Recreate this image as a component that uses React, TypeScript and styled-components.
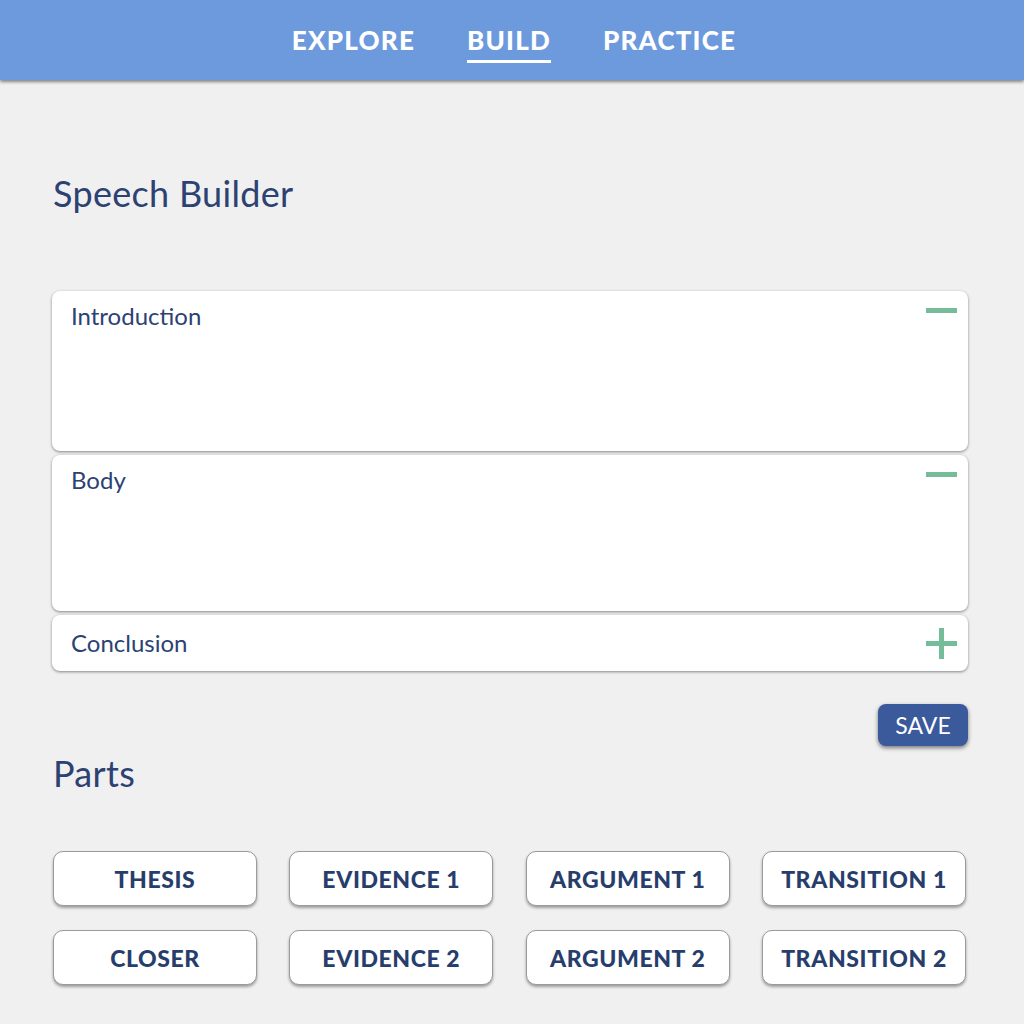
import styled, { createGlobalStyle } from 'styled-components'

const GlobalStyle = createGlobalStyle`
  html, body {
    margin: 0;
    padding: 0;
    background: #f0f0f0;
    font-family: Lato, 'Open Sans', sans-serif;
  }
`

const Page = styled.div`
  min-height: 1024px;
  background: #f0f0f0;
`

const Header = styled.header`
  height: 80px;
  background: #6c9adc;
  box-shadow: 0 2px 3px rgba(0, 0, 0, 0.45);
  display: flex;
  justify-content: center;
  align-items: flex-start;
  gap: 52px;
  padding-left: 4px;
  box-sizing: border-box;
`

const NavItem = styled.a<{ $active?: boolean }>`
  margin-top: 24px;
  color: #ffffff;
  font-size: 26px;
  font-weight: 900;
  letter-spacing: 1.2px;
  line-height: 32px;
  padding-bottom: 4px;
  border-bottom: 3px solid ${(p) => (p.$active ? '#ffffff' : 'transparent')};
  cursor: pointer;
`

const Content = styled.main`
  padding: 93px 56px 0 52px;
  display: flex;
  flex-direction: column;
`

const Heading = styled.h1<{ $gap?: number }>`
  margin: ${(p) => p.$gap ?? 0}px 0 0 1px;
  font-size: 36px;
  font-weight: 400;
  letter-spacing: 0.3px;
  color: #2c4272;
  line-height: 40px;
`

const Sections = styled.div`
  display: flex;
  flex-direction: column;
  gap: 4px;
  margin-top: 78px;
`

const Section = styled.div<{ $height: number }>`
  background: #ffffff;
  border-radius: 8px;
  box-shadow: 0 1px 3px rgba(0, 0, 0, 0.45);
  height: ${(p) => p.$height}px;
  display: flex;
  justify-content: space-between;
  align-items: flex-start;
  padding: 0 10px 0 19px;
  box-sizing: border-box;
`

const SectionLabel = styled.span<{ $open: boolean }>`
  margin-top: ${(p) => (p.$open ? '12px' : '15px')};
  font-size: 24px;
  color: #2c4272;
  line-height: 26px;
`

const Toggle = styled.span<{ $open: boolean }>`
  margin-top: ${(p) => (p.$open ? '17px' : '13px')};
  width: 32px;
  height: 32px;
  display: flex;
  align-items: flex-start;
`

const SaveRow = styled.div`
  display: flex;
  justify-content: flex-end;
  margin-top: 33px;
`

const SaveButton = styled.button`
  width: 90px;
  height: 42px;
  border: none;
  border-radius: 8px;
  background: #3b5a9b;
  color: #ffffff;
  font-family: Lato, sans-serif;
  font-size: 23px;
  box-shadow: 0 2px 4px rgba(0, 0, 0, 0.5);
  cursor: pointer;
`

const PartsGrid = styled.div`
  display: grid;
  grid-template-columns: repeat(4, 204px);
  justify-content: space-between;
  row-gap: 24px;
  margin: 58px 2px 0 1px;
`

const PartButton = styled.button`
  height: 55px;
  background: #ffffff;
  border: 1px solid #9a9a9a;
  border-radius: 10px;
  box-shadow: 0 2px 3px rgba(0, 0, 0, 0.35);
  color: #273e6c;
  font-family: Lato, sans-serif;
  font-weight: 900;
  font-size: 23px;
  letter-spacing: 0.6px;
  padding: 0;
  cursor: pointer;
`

const Minus = () => (
  <svg width="32" height="32" viewBox="0 0 32 32">
    <rect x="0" y="0" width="31" height="5" fill="#76bb9a" />
  </svg>
)

const Plus = () => (
  <svg width="32" height="32" viewBox="0 0 32 32">
    <rect x="0" y="13" width="31" height="5" fill="#76bb9a" />
    <rect x="13" y="0" width="5" height="31" fill="#76bb9a" />
  </svg>
)

const sections = [
  { label: 'Introduction', open: true, height: 160 },
  { label: 'Body', open: true, height: 156 },
  { label: 'Conclusion', open: false, height: 56 },
]

const parts = [
  'THESIS',
  'EVIDENCE 1',
  'ARGUMENT 1',
  'TRANSITION 1',
  'CLOSER',
  'EVIDENCE 2',
  'ARGUMENT 2',
  'TRANSITION 2',
]

export default function App() {
  return (
    <Page>
      <GlobalStyle />
      <Header>
        <NavItem>EXPLORE</NavItem>
        <NavItem $active>BUILD</NavItem>
        <NavItem>PRACTICE</NavItem>
      </Header>
      <Content>
        <Heading>Speech Builder</Heading>
        <Sections>
          {sections.map((s) => (
            <Section key={s.label} $height={s.height}>
              <SectionLabel $open={s.open}>{s.label}</SectionLabel>
              <Toggle $open={s.open}>{s.open ? <Minus /> : <Plus />}</Toggle>
            </Section>
          ))}
        </Sections>
        <SaveRow>
          <SaveButton>SAVE</SaveButton>
        </SaveRow>
        <Heading as="h2" $gap={7}>
          Parts
        </Heading>
        <PartsGrid>
          {parts.map((p) => (
            <PartButton key={p}>{p}</PartButton>
          ))}
        </PartsGrid>
      </Content>
    </Page>
  )
}
